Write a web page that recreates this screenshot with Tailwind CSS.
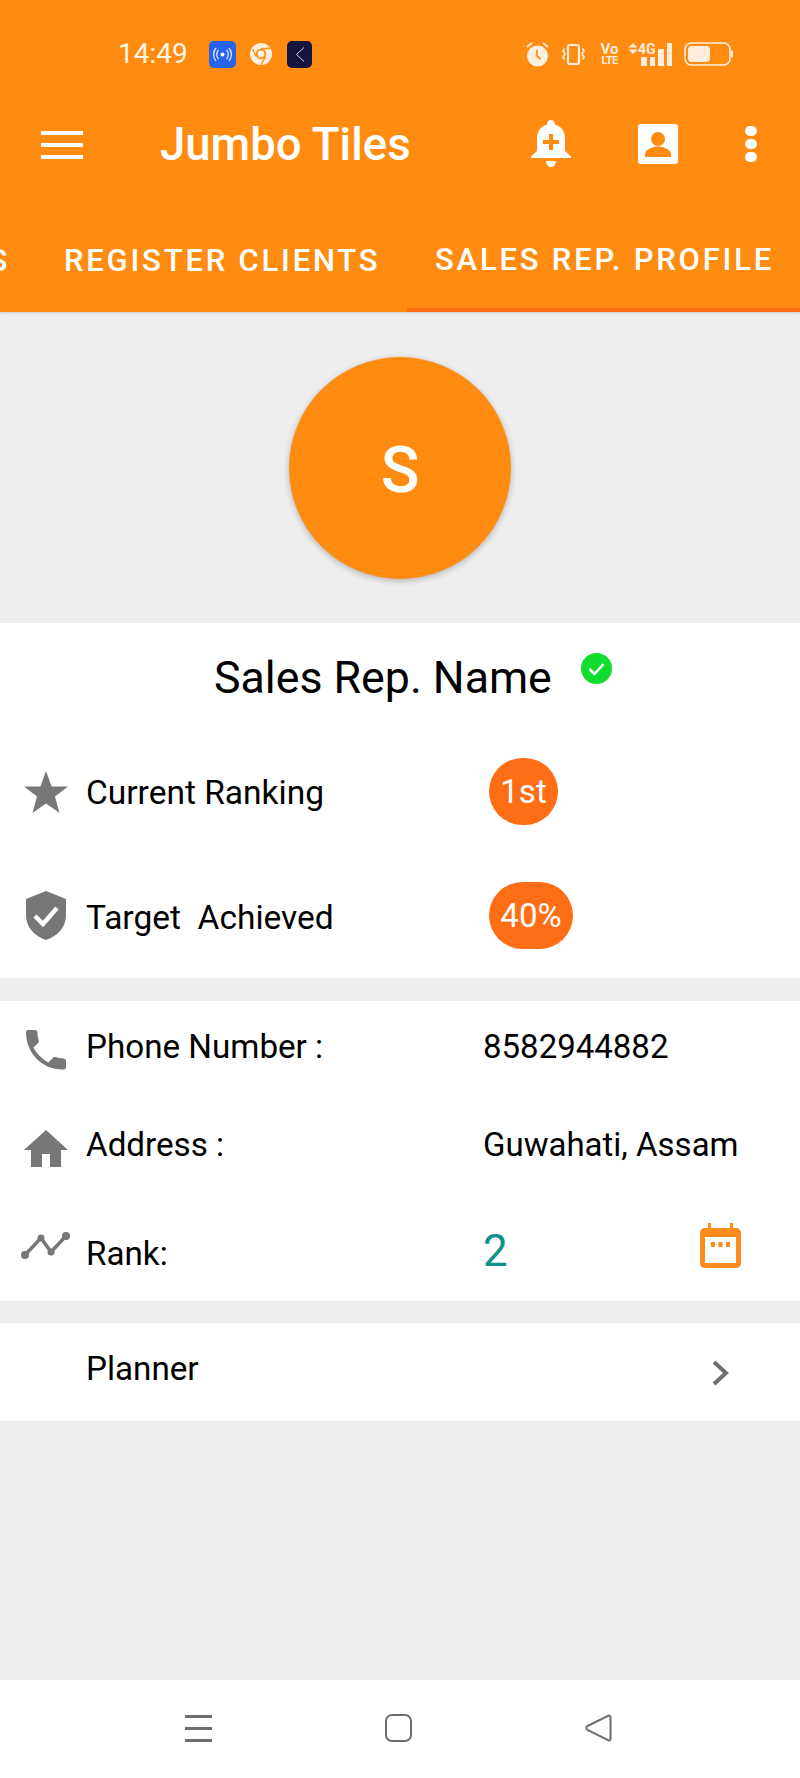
<!DOCTYPE html>
<html><head><meta charset="utf-8">
<script src="https://cdn.jsdelivr.net/npm/@tailwindcss/browser@4"></script>
</head>
<body class="m-0">
<div class="w-[800px] h-[1778px] flex flex-col bg-[#eeeeee] overflow-hidden font-['Roboto',sans-serif] text-black">
  <header class="h-[312px] shrink-0 bg-[#ff8c10] text-white flex flex-col shadow-sm">
    <div class="h-[108px] flex items-center">
      <span class="ml-[118px] w-[91px] text-[28px] leading-none text-[#fff6e8]">14:49</span>
      <svg class="w-[27px] h-[27px]" viewBox="0 0 27 27"><rect width="27" height="27" rx="5" fill="#2563eb"/><circle cx="13.5" cy="13.5" r="2" fill="#fff"/><path d="M9.5 9a6.5 6.5 0 0 0 0 9M17.5 9a6.5 6.5 0 0 1 0 9M7 7a10 10 0 0 0 0 13M20 7a10 10 0 0 1 0 13" fill="none" stroke="#dbe6ff" stroke-width="1.3"/></svg>
      <svg class="ml-[14px] w-[22px] h-[22px]" viewBox="0 0 22 22"><circle cx="11" cy="11" r="11" fill="#fff1df"/><circle cx="11" cy="11" r="5.2" fill="#ff8c10"/><circle cx="11" cy="11" r="3.4" fill="#fff1df"/><path d="M11 5.5h9M6.2 13.6 2.5 6M15.8 13.6 11 21.5" stroke="#ff8c10" stroke-width="1.3"/></svg>
      <svg class="ml-[15px] w-[25px] h-[27px]" viewBox="0 0 25 27"><rect width="25" height="27" rx="5" fill="#14143c"/><path d="M17 6.5 9.5 13.5 17 20.5" fill="none" stroke="#d8d8e8" stroke-width="1"/></svg>
      <svg class="ml-[214px] w-[23px] h-[25px]" viewBox="0 0 23 25"><circle cx="11.500" cy="14" r="10.500" fill="#ffeedd"/><path d="M11 8v6l3.500 3" fill="none" stroke="#ff8c10" stroke-width="1.700"/><path d="M1 5l5-4M22 5l-5-4" stroke="#ffeedd" stroke-width="2"/></svg>
      <svg class="ml-[13px] w-[23px] h-[21px]" viewBox="0 0 23 21"><rect x="6" y="1" width="11" height="19" rx="2" fill="none" stroke="#ffeedd" stroke-width="2.200"/><path d="M2.500 4.500 1 7l2 3-2 3 1.500 2.500M20.500 4.500 22 7l-2 3 2 3-1.500 2.500" fill="none" stroke="#ffeedd" stroke-width="1.600"/></svg>
      <div class="ml-[16px] w-[17px] flex flex-col items-center text-[#ffeedd] font-bold"><span class="text-[15px] leading-[12px]">Vo</span><span class="text-[11px] leading-[11px] tracking-[-0.6px]">LTE</span></div>
      <svg class="ml-[10px] w-[10px] h-[11px] -mt-[12px]" viewBox="0 0 10 11"><path d="M5 0l4.500 4.500H.5zM5 11 .5 6.500h9z" fill="#ffeedd"/></svg>
      <div class="w-[36px] h-[23px] relative text-[#ffeedd]">
        <span class="absolute left-[0px] -top-[1px] text-[14px] leading-[14px] font-bold">4G</span>
        <div class="absolute inset-0 flex items-end gap-[3px] pl-[3px]"><i class="w-[5.5px] h-[9px] bg-[#ffeedd]"></i><i class="w-[5.5px] h-[9px] bg-[#ffeedd]"></i><i class="w-[5.5px] h-[17px] bg-[#ffeedd]"></i><i class="w-[5.5px] h-[23px] bg-[#ffeedd]"></i></div>
      </div>
      <svg class="ml-[10px] w-[50px] h-[24px]" viewBox="0 0 50 24"><rect x="1" y="1" width="45" height="22" rx="6.500" fill="none" stroke="#ffeedd" stroke-width="1.600"/><rect x="4" y="4" width="22" height="16" rx="4" fill="#ffeedd"/><path d="M48 8.500v7" stroke="#ffeedd" stroke-width="2"/></svg>
    </div>
    <div class="h-[74px] flex items-center relative">
      <div class="ml-[41px] w-[42px] flex flex-col gap-[8px]"><i class="h-[4px] bg-white"></i><i class="h-[4px] bg-white"></i><i class="h-[4px] bg-white"></i></div>
      <h1 class="ml-[77px] w-[371px] text-[45.500px] leading-none font-medium whitespace-nowrap">Jumbo Tiles</h1>
      <svg class="w-[40px] h-[47px] -mt-[4px]" viewBox="0 0 40 47"><path d="M20 0c2.500 0 4 2 4 4.500C31 6.500 34 12 34 19v12l6 5.500V38H0v-1.500L6 31V19c0-7 3-12.500 10-14.500C16 2 17.500 0 20 0z" fill="#fff"/><path d="M15 41h10c0 3-2 6-5 6s-5-3-5-6z" fill="#fff"/><path d="M18 14h4v6h6v4h-6v6h-4v-6h-6v-4h6z" fill="#ff8c10"/></svg>
      <svg class="ml-[67px] w-[40px] h-[40px] -mt-[2px]" viewBox="0 0 40 40"><rect width="40" height="40" rx="3" fill="#fff"/><circle cx="20" cy="15" r="7" fill="#ff8c10"/><path d="M7 33v-3c0-5 9-7.500 13-7.500S33 25 33 30v3z" fill="#ff8c10"/></svg>
      <div class="ml-[67px] w-[12px] flex flex-col gap-[3px] -mt-[2px]"><i class="h-[10px] rounded-full bg-white"></i><i class="h-[10px] rounded-full bg-white"></i><i class="h-[10px] rounded-full bg-white"></i></div>
    </div>
    <nav class="flex-1 flex text-[31px] font-medium tracking-[2.800px] whitespace-nowrap">
      <div class="w-[36px] overflow-hidden flex justify-end items-center pt-[28px] pr-[26px]"><span>S</span></div>
      <div class="w-[371px] pl-[28px] flex items-center pt-[28px]">REGISTER CLIENTS</div>
      <div class="w-[393px] pl-[28px] flex items-center pt-[30px] border-b-[4px] border-[#ff6d14]">SALES REP. PROFILE</div>
    </nav>
  </header>

  <div class="h-[311px] shrink-0 flex justify-center pt-[45px]">
    <div class="w-[222px] h-[222px] rounded-full bg-[#ff8c10] shadow-[0_2px_6px_rgba(0,0,0,0.25)] flex items-center justify-center text-white text-[64px] font-medium pt-[6px]">S</div>
  </div>

  <section class="h-[355px] shrink-0 bg-white flex flex-col">
    <div class="h-[107px] flex items-start pl-[214px] pt-[29px]">
      <span class="text-[44.700px] leading-[52px]">Sales Rep. Name</span>
      <svg class="ml-[29px] mt-[1px] w-[31px] h-[31px]" viewBox="0 0 31 31"><circle cx="15.500" cy="15.500" r="15.500" fill="#12dc2e"/><path d="M8.500 16l5 5 9-10" fill="none" stroke="#fff" stroke-width="2.500"/></svg>
    </div>
    <div class="h-[125px] flex items-center">
      <svg class="ml-[24px] w-[44px] h-[42px]" viewBox="0 0 44 42"><path d="M22 0l5.600 15.500H44L31 25.500 35.500 42 22 32.500 8.500 42 13 25.500 0 15.500h16.400z" fill="#777"/></svg>
      <span class="ml-[18px] w-[403px] text-[33.500px] leading-none mt-[2px]">Current Ranking</span>
      <span class="h-[67px] w-[69px] rounded-full bg-[#ff6d14] text-white text-[33px] flex items-center justify-center">1st</span>
    </div>
    <div class="h-[125px] flex items-center">
      <svg class="ml-[26px] w-[40px] h-[49px]" viewBox="0 0 40 49"><path d="M20 0l20 8v16c0 12-8 21-20 25C8 45 0 36 0 24V8z" fill="#777"/><path d="M9 25l8 8 14-16" fill="none" stroke="#fff" stroke-width="4.500"/></svg>
      <span class="ml-[20px] w-[403px] text-[33.500px] leading-none whitespace-pre mt-[4px]">Target  Achieved</span>
      <span class="h-[67px] w-[84px] rounded-full bg-[#ff6d14] text-white text-[33px] flex items-center justify-center">40%</span>
    </div>
  </section>

  <section class="mt-[23px] h-[300px] shrink-0 bg-white flex flex-col">
    <div class="h-[98px] flex items-center">
      <svg class="ml-[26px] w-[40px] h-[40px]" viewBox="0 0 40 40"><path d="M2 0h7c1.500 0 2.500 1 2.500 2.500 0 3 .5 5.500 1.300 8 .2.800 0 1.700-.6 2.400l-4.700 4.700c3.200 6.300 8.500 11.500 14.800 14.800l4.700-4.700c.6-.6 1.600-.8 2.400-.6 2.500.8 5 1.300 8 1.300 1.500 0 2.600 1 2.600 2.500v6.500c0 1.200-1 2.100-2.500 2.100C16.500 40 0 23.500 0 2 0 1 1 0 2 0z" fill="#777"/></svg>
      <span class="ml-[20px] w-[397px] text-[33.200px] leading-none -mt-[7px]">Phone Number :</span>
      <span class="text-[33px] leading-none -mt-[7px]">8582944882</span>
    </div>
    <div class="h-[98px] flex items-center">
      <svg class="ml-[24px] w-[44px] h-[37px]" viewBox="0 0 44 37"><path d="M22 0 44 20H37V37H26V24H18V37H7V20H0z" fill="#777"/></svg>
      <span class="ml-[18px] w-[397px] text-[33.200px] leading-none -mt-[7px]">Address :</span>
      <span class="text-[33px] leading-none -mt-[7px]">Guwahati, Assam</span>
    </div>
    <div class="h-[104px] flex items-center relative">
      <svg class="ml-[21px] -mt-[8px] w-[50px] h-[27px]" viewBox="0 0 50 27"><path d="M4 23 20 6l10 14L45 4" fill="none" stroke="#777" stroke-width="3.500"/><circle cx="4" cy="23" r="4" fill="#777"/><circle cx="20" cy="6" r="3.500" fill="#777"/><circle cx="30" cy="20" r="3.500" fill="#777"/><circle cx="45" cy="4" r="4" fill="#777"/></svg>
      <span class="ml-[15px] w-[397px] text-[33.200px] leading-none mt-[10px]">Rank:</span>
      <span class="w-[217px] text-[44px] leading-none text-[#12908c] mt-[4px]">2</span>
      <svg class="w-[41px] h-[45px] -mt-[8px]" viewBox="0 0 41 45"><path d="M8 0h3v5h19V0h3v5h3c3 0 5 2 5 5v30c0 3-2 5-5 5H5c-3 0-5-2-5-5V10c0-3 2-5 5-5h3z" fill="#ff8c1e"/><rect x="5" y="14" width="31" height="26" fill="#fff"/><rect x="11" y="19" width="4" height="5" fill="#ff8c1e"/><rect x="18.500" y="19" width="4" height="5" fill="#ff8c1e"/><rect x="26" y="19" width="4" height="5" fill="#ff8c1e"/></svg>
    </div>
  </section>

  <section class="mt-[22px] h-[98px] shrink-0 bg-white flex items-center">
    <span class="ml-[86px] w-[621px] text-[33.200px] leading-none -mt-[7px]">Planner</span>
    <svg class="ml-[5px] mt-[2px] w-[17px] h-[26px]" viewBox="0 0 17 26"><path d="M2 2 14 13 2 24" fill="none" stroke="#6f6f6f" stroke-width="4"/></svg>
  </section>

  <div class="flex-1"></div>

  <footer class="h-[98px] shrink-0 bg-white flex items-center">
    <div class="ml-[185px] w-[27px] flex flex-col gap-[9px] -mt-[2px]"><i class="h-[3px] bg-[#6d6d6d]"></i><i class="h-[3px] bg-[#6d6d6d]"></i><i class="h-[3px] bg-[#6d6d6d]"></i></div>
    <svg class="ml-[173px] -mt-[2px] w-[27px] h-[28px]" viewBox="0 0 27 28"><rect x="1" y="1" width="25" height="26" rx="6" fill="none" stroke="#6d6d6d" stroke-width="2"/></svg>
    <svg class="ml-[173px] -mt-[2px] w-[27px] h-[28px]" viewBox="0 0 27 28"><path d="M2.500 12 23 1.800c1.200-.6 2.500 0 2.500 1.500v21.400c0 1.500-1.300 2.100-2.500 1.500L2.500 16c-1.500-1-1.500-3 0-4z" fill="none" stroke="#6d6d6d" stroke-width="2"/></svg>
  </footer>
</div>
</body></html>
